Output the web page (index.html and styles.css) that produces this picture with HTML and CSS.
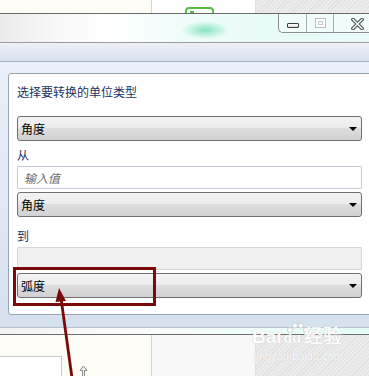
FILE: index.html
```html
<!DOCTYPE html>
<html lang="zh-CN">

<head>
    <meta charset="UTF-8" />
    <meta name="viewport" content="width=device-width, initial-scale=1" />
    <title>单位转换</title>
    <link rel="stylesheet" href="styles.css">
</head>

<body>

    <!-- desktop strip above the window -->
    <div class="desk desk-top">
        <div class="col col-cream"></div>
        <div class="col col-white">
            <div class="tray-icon"><span></span></div>
        </div>
        <div class="col col-hatch"></div>
    </div>

    <!-- window -->
    <div class="window">
        <div class="titlebar">
            <div class="caption-btns">
                <div class="cap-btn cap-min"><span class="min-icon"></span></div>
                <div class="cap-btn cap-max"><span class="max-icon"></span></div>
                <div class="cap-btn cap-close">
                    <svg width="13" height="12" viewBox="0 0 13 12">
                        <path d="M2 1.5 L11 10.5 M11 1.5 L2 10.5" stroke="#4a4f57" stroke-width="3.6" stroke-linecap="square" />
                        <path d="M2 1.5 L11 10.5 M11 1.5 L2 10.5" stroke="#ffffff" stroke-width="1.4" stroke-linecap="square" />
                    </svg>
                </div>
            </div>
        </div>
        <div class="toolbar"></div>

        <div class="client">
            <div class="panel">
                <div class="label label-first">选择要转换的单位类型</div>
                <div class="combo">角度<span class="arrow"></span></div>

                <div class="label label-from">从</div>
                <input class="field" type="text" placeholder="输入值">
                <div class="combo">角度<span class="arrow"></span></div>

                <div class="label label-to">到</div>
                <input class="field" type="text" disabled>
                <div class="combo">弧度<span class="arrow"></span></div>
            </div>
        </div>
        <div class="frame-bottom"></div>
    </div>

    <!-- desktop strip below the window -->
    <div class="desk desk-bottom">
        <div class="col col-cream">
            <div class="note-box"></div>
        </div>
        <div class="col col-white"></div>
        <div class="col col-hatch"></div>
    </div>

    <!-- annotation over the screenshot -->
    <div class="highlight"></div>
    <svg class="pointer" width="369" height="376" viewBox="0 0 369 376">
        <line x1="72" y1="378" x2="61" y2="298" stroke="#7a0a0a" stroke-width="2.8" />
        <polygon points="59,288 66,301 55.5,302" fill="#7a0a0a" />
        <g fill="#f4f4f4" stroke="#8a8a8a" stroke-width="1">
            <polygon points="83.5,366 80,370.5 82.5,370.5 82.5,378 84.5,378 84.5,370.5 87,370.5" />
        </g>
        <!-- paw of the watermark -->
        <g fill="#fff" stroke="#c4c4c4" stroke-width="0.8" opacity="0.9">
            <circle cx="290" cy="330" r="2.6" />
            <circle cx="295" cy="325.5" r="2.6" />
            <circle cx="301" cy="325.5" r="2.6" />
            <circle cx="306" cy="330" r="2.6" />
        </g>
    </svg>

    <div class="watermark">
        <div class="wm-logo">Bai<span class="wm-du">du</span>经验</div>
        <div class="wm-url">jingyan.baidu.com</div>
    </div>

</body>

</html>
```

FILE: styles.css
```css
* {
    box-sizing: border-box;
}

body {
    margin: 0;
    width: 369px;
    height: 376px;
    overflow: hidden;
    position: relative;
    font-family: "Noto Sans CJK SC", "Microsoft YaHei", sans-serif;
    font-size: 12px;
    background: #fdfdf6;
}

/* --- DESKTOP BEHIND --- */
.desk {
    display: flex;
    overflow: hidden;
}

.desk-top {
    height: 13px;
}

.desk-bottom {
    height: 41px;
}

.col {
    height: 100%;
    overflow: hidden;
}

.col-cream {
    width: 152px;
    background: #fdfdf5;
    border-right: 1px solid #d4d4d4;
}

.col-white {
    width: 103px;
    background: #f8f8f8;
}

.col-hatch {
    flex: 1;
    border-left: 1px solid #e0e0e0;
    background: repeating-linear-gradient(135deg, #e1e1e1 0 1px, #ececec 1px 3px);
}

.desk-top .col-white {
    background: #fff;
}

.tray-icon {
    width: 29px;
    height: 12px;
    margin: 7px 0 0 33px;
    border: 2px solid #52c03c;
    border-radius: 4px 4px 0 0;
}

.tray-icon span {
    display: block;
    width: 4px;
    height: 3px;
    margin: 2px 0 0 3px;
    background: #52c03c;
}

.note-box {
    width: 62px;
    height: 30px;
    margin-top: 21px;
    background: #fff;
    border-top: 1px solid #c9c9c9;
    border-right: 1px solid #c9c9c9;
}

/* --- WINDOW FRAME --- */
.titlebar {
    display: flex;
    justify-content: flex-end;
    height: 30px;
    border-top: 1px solid #6a6a6a;
    border-bottom: 1px solid #9c9c9c;
    background:
        radial-gradient(ellipse 24px 9px at 205px 16px, rgba(110, 222, 178, 0.8), rgba(110, 222, 178, 0) 100%),
        linear-gradient(to right, #ebebeb 0, #f8f8f8 55px, #fff 110px, #f2fdfb 165px, #e8fbf8 260px, #eafbf9 100%);
}

.caption-btns {
    display: flex;
    align-self: flex-start;
    margin-right: -11px;
    height: 19px;
    border-left: 1px solid #8e8e8e;
    border-bottom: 1px solid #8e8e8e;
    border-bottom-left-radius: 5px;
    background: rgba(255, 255, 255, 0.35);
}

.cap-btn {
    display: flex;
    justify-content: center;
    align-items: flex-start;
    height: 100%;
}

.cap-min {
    width: 28px;
    border-right: 1px solid #a9b0b4;
}

.cap-max {
    width: 27px;
    border-right: 1px solid #a9b0b4;
}

.cap-close {
    width: 46px;
    padding-top: 4px;
}

.min-icon {
    width: 12px;
    height: 5px;
    margin-top: 9px;
    border: 1px solid #3d3d3d;
    border-radius: 1px;
    background: linear-gradient(#ffffff, #dcdcdc);
}

.max-icon {
    width: 11px;
    height: 10px;
    margin-top: 4px;
    border: 1px solid #b9bdc0;
    box-shadow: inset 0 0 0 2px #fff, inset 0 0 0 3px #c6cacd;
}

.toolbar {
    height: 19px;
    border-bottom: 1px solid #a7b1c0;
    background: linear-gradient(#eef1f8, #dadff0);
}

.client {
    height: 265px;
    padding: 11px 0 12px 8px;
    overflow: hidden;
    background: linear-gradient(#eaf0f9, #d6e1ee);
}

.frame-bottom {
    height: 8px;
    border-top: 1px solid #b7c2cf;
    border-bottom: 1px solid #6e6e6e;
    background: linear-gradient(to right, #f2f2f2 0, #fbfbfb 120px, #effdfa 250px, #e3fbf7 100%);
}

/* --- PANEL CONTENT --- */
.panel {
    width: 390px;
    height: 242px;
    padding: 10px 0 0 8px;
    background: #fff;
    border: 1px solid #98a3b1;
    border-radius: 3px 0 0 3px;
}

.label {
    height: 16px;
    line-height: 16px;
    color: #1b3262;
}

.label-from {
    margin-top: 6px;
}

.label-to {
    margin-top: 11px;
}

.combo {
    position: relative;
    display: flex;
    align-items: center;
    width: 345px;
    height: 25px;
    margin-top: 3px;
    padding-left: 3px;
    color: #000;
    border: 1px solid #707070;
    border-radius: 3px;
    background: linear-gradient(#f3f3f3 0, #ececec 45%, #dedede 50%, #d1d1d1 100%);
}

.label-first + .combo {
    margin-top: 16px;
}

.arrow {
    margin-left: auto;
    margin-right: 4px;
    width: 0;
    height: 0;
    border-left: 4px solid transparent;
    border-right: 4px solid transparent;
    border-top: 4px solid #000;
}

.field {
    display: block;
    width: 345px;
    height: 23px;
    margin: 3px 0 0;
    padding: 0 6px;
    font-family: inherit;
    font-size: 12px;
    border: 1px solid #c3ccd7;
    border-radius: 1px;
    background: #fff;
    outline: none;
}

.field::placeholder {
    color: #6d6d6d;
    font-style: italic;
}

.field:disabled {
    background: #f0f0f0;
    border-color: #d7d7d7;
}

/* --- ANNOTATION --- */
.highlight {
    position: absolute;
    left: 13px;
    top: 267px;
    width: 143px;
    height: 39px;
    border: 3px solid #7a0a0a;
}

.pointer {
    position: absolute;
    left: 0;
    top: 0;
    pointer-events: none;
}

.watermark {
    position: absolute;
    left: 252px;
    top: 326px;
    color: #fff;
    opacity: 0.9;
    text-shadow: 0 0 1px #bdbdbd;
}

.wm-logo {
    font-family: "Liberation Sans", sans-serif;
    font-size: 19px;
    font-weight: bold;
    line-height: 22px;
}

.wm-du {
    font-size: 14px;
    margin: 0 3px 0 2px;
}

.wm-url {
    font-family: "Liberation Sans", sans-serif;
    font-size: 11px;
    line-height: 14px;
    margin-left: 2px;
}
```
